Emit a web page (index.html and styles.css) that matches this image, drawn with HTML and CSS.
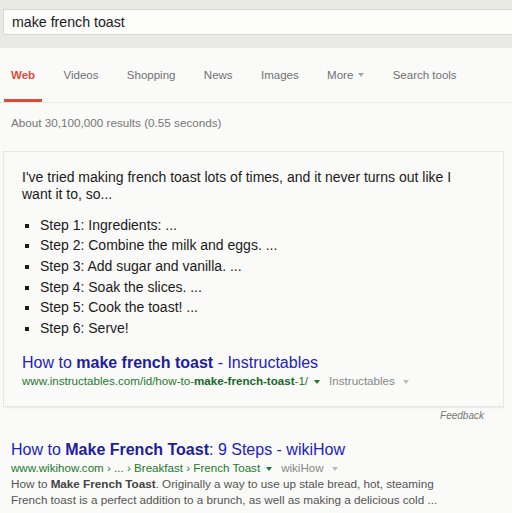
FILE: index.html
```html
<!DOCTYPE html>
<html>
<head>
<meta charset="utf-8">
<link rel="stylesheet" href="styles.css">
</head>
<body>
<div class="topbar"><div class="searchbox">make french toast</div></div>
<nav class="tabs">
  <span class="tab active">Web</span>
  <span class="tab">Videos</span>
  <span class="tab">Shopping</span>
  <span class="tab">News</span>
  <span class="tab">Images</span>
  <span class="tab">More<span class="caret tabcaret"></span></span>
  <span class="tab">Search tools</span>
</nav>
<div class="stats">About 30,100,000 results (0.55 seconds)</div>
<div class="card">
  <p class="lead">I've tried making french toast lots of times, and it never turns out like I want it to, so...</p>
  <ul class="steps">
    <li>Step 1: Ingredients: ...</li>
    <li>Step 2: Combine the milk and eggs. ...</li>
    <li>Step 3: Add sugar and vanilla. ...</li>
    <li>Step 4: Soak the slices. ...</li>
    <li>Step 5: Cook the toast! ...</li>
    <li>Step 6: Serve!</li>
  </ul>
  <a class="title">How to <b>make french toast</b> - Instructables</a>
  <div class="url">www.instructables.com/id/how-to-<b>make-french-toast</b>-1/<span class="caret green"></span><span class="source">Instructables</span><span class="caret gray"></span></div>
</div>
<div class="feedback">Feedback</div>
<div class="result">
  <a class="title">How to <b>Make French Toast</b>: 9 Steps - wikiHow</a>
  <div class="url url2">www.wikihow.com › ... › Breakfast › French Toast<span class="caret green"></span><span class="source">wikiHow</span><span class="caret gray"></span></div>
  <div class="snippet">How to <b>Make French Toast</b>. Originally a way to use up stale bread, hot, steaming French toast is a perfect addition to a brunch, as well as making a delicious cold ...</div>
</div>
</body>
</html>
```
FILE: styles.css
```css
html, body {
  margin: 0;
  background: #fafaf8;
  font-family: "Liberation Sans", Arial, sans-serif;
  overflow: hidden;
}
.topbar {
  height: 48px;
  box-sizing: border-box;
  padding: 9px 0 0 3px;
  background-color: #ebebe8;
  background-image: repeating-conic-gradient(#e3e3df 0 25%, #efefec 0 50%);
  background-size: 2px 2px;
}
.searchbox {
  height: 26px;
  box-sizing: border-box;
  border: 1px solid #d6d6d2;
  border-right: none;
  background: #fcfcfb;
  padding-left: 8px;
  font-size: 14.2px;
  line-height: 24px;
  color: #1a1a1a;
}
.tabs {
  display: flex;
  gap: 14.4px;
  height: 55px;
  box-sizing: border-box;
  padding-left: 4px;
  border-bottom: 1px dotted #d8d8d8;
}
.tab {
  display: flex;
  align-items: center;
  padding: 3px 7px 0;
  border-bottom: 3px solid transparent;
  font-size: 11.5px;
  color: #707070;
}
.tab.active {
  color: #dd4b39;
  font-weight: bold;
  border-bottom-color: #dd4b39;
}
.caret {
  display: inline-block;
  width: 0;
  height: 0;
  border-left: 3px solid transparent;
  border-right: 3px solid transparent;
  border-top: 4px solid #999;
}
.tabcaret {
  margin-left: 5px;
  border-top-color: #aaa;
}
.stats {
  padding: 12px 0 0 11px;
  font-size: 11.7px;
  line-height: 16px;
  color: #777;
}
.card {
  margin: 20px 8px 0 3px;
  border: 1px dotted #d6d6d6;
  box-shadow: 0 1px 1px rgba(0,0,0,0.05);
  padding: 17px 30px 18px 18px;
  color: #1a1a1a;
}
.lead {
  margin: 0;
  font-size: 14px;
  line-height: 17px;
}
.steps {
  margin: 11.5px 0 0;
  padding-left: 18px;
  font-size: 14px;
  line-height: 20.7px;
  list-style: square;
}
.title {
  display: block;
  font-size: 16px;
  line-height: 20px;
  color: #2121c2;
  text-decoration: none;
}
.card .title {
  margin-top: 14px;
}
.title b {
  color: #1d1d9e;
}
.url {
  font-size: 11.6px;
  line-height: 15px;
  color: #1a7a2e;
  white-space: nowrap;
}
.url b {
  color: #136a25;
}
.url .caret {
  vertical-align: middle;
  margin-left: 6px;
}
.caret.green {
  border-top-color: #1a7a2e;
}
.caret.gray {
  border-top-color: #bbb;
  margin-left: 8px;
}
.source {
  color: #888;
  margin-left: 9px;
}
.feedback {
  margin: 2px 28px 0 0;
  text-align: right;
  font-size: 10px;
  line-height: 13px;
  font-style: italic;
  color: #777;
}
.result {
  margin-top: 18px;
  padding-left: 11px;
}
.url2 {
  line-height: 16px;
}
.snippet {
  font-size: 11.7px;
  line-height: 16.4px;
  color: #545454;
  padding-right: 60px;
}
.snippet b {
  color: #444;
}
```
